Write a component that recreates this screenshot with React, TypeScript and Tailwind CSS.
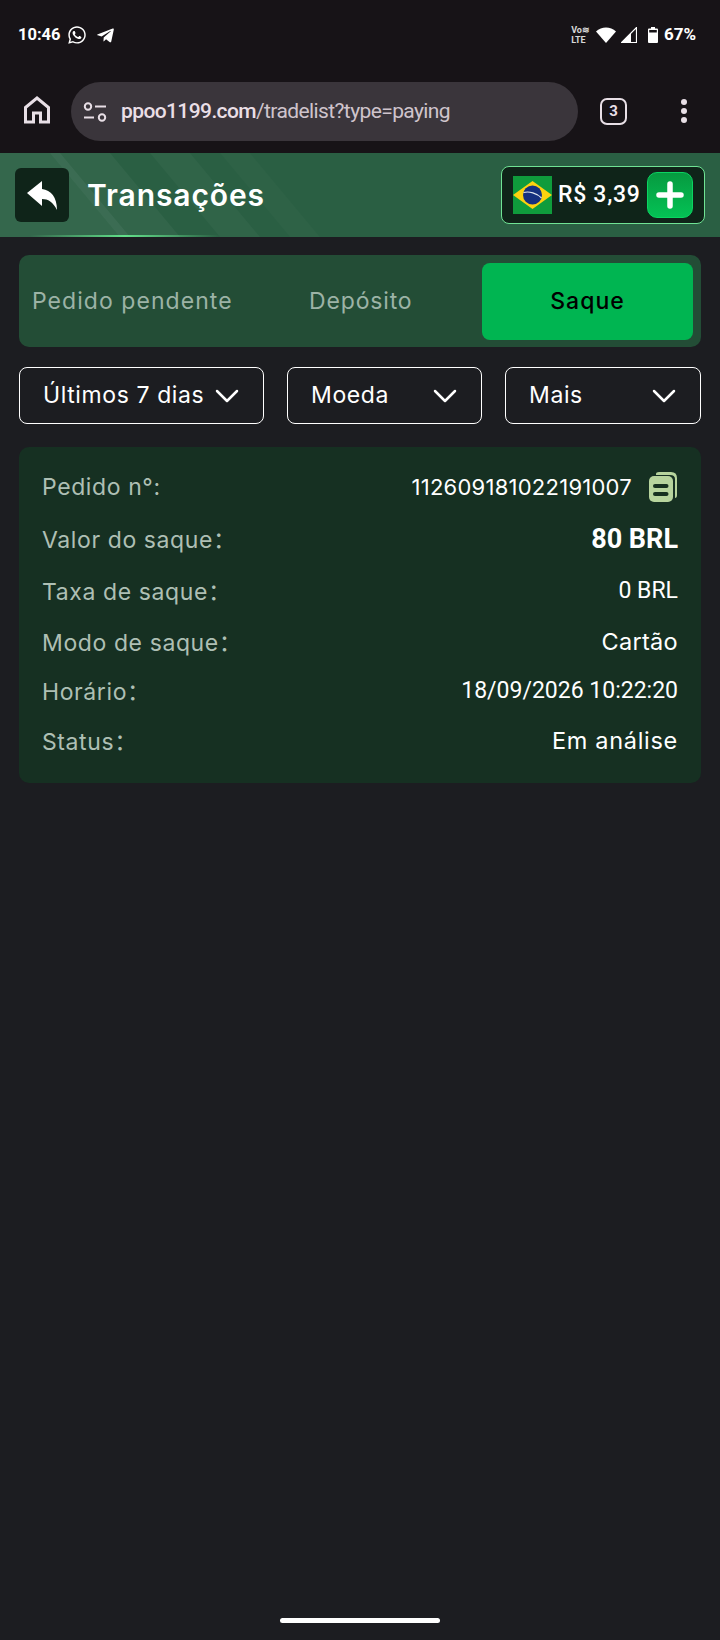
import { ChevronDown } from 'lucide-react';
import { FaWhatsapp, FaTelegramPlane } from 'react-icons/fa';

const rows = [
  { label: 'Valor do saque', value: '80 BRL', cls: "h-[53px] font-['Roboto',sans-serif] text-[27px] font-bold" },
  { label: 'Taxa de saque', value: '0 BRL', cls: "h-[51px] font-['Roboto',sans-serif] text-[23px]" },
  { label: 'Modo de saque', value: 'Cartão', cls: 'h-[50px] text-[23.5px] tracking-[0.3px]' },
  { label: 'Horário', value: '18/09/2026 10:22:20', cls: "h-[49px] font-['Roboto',sans-serif] text-[23px]" },
  { label: 'Status', value: 'Em análise', cls: 'h-[50px] text-[23.5px] tracking-[0.7px]' },
];

function Flag() {
  return (
    <svg width="39" height="38" viewBox="0 0 39 38">
      <rect width="39" height="38" fill="#0f9c3c" />
      <path d="M19.5 5 L39 19 L19.5 33 L0 19 Z" fill="#fcd20f" />
      <circle cx="19.5" cy="19" r="9.5" fill="#15307f" />
      <path d="M10.5 16.5 C16 15 24 17 28.5 22" stroke="#dfe6ee" strokeWidth="1.2" fill="none" />
    </svg>
  );
}

function StatusBar() {
  return (
    <div className="flex h-[70px] items-center justify-between pl-[18px] pr-6 font-['Roboto',sans-serif] text-[17px] font-bold text-white">
      <div className="flex items-center">
        <span className="text-[16.5px]">10:46</span>
        <FaWhatsapp size={20} className="ml-[6px]" />
        <FaTelegramPlane size={19} className="ml-[9px]" />
      </div>
      <div className="flex items-center">
        <div className="mr-[6px] text-[9px] font-bold leading-[10px] text-[#d8d8d8]">
          <div>Vo≋</div>
          <div>LTE</div>
        </div>
        <svg width="20" height="16" viewBox="0 0 20 16" fill="white" className="mr-[5px]">
          <path d="M0 4.5 C5.5 -1 14.5 -1 20 4.5 L10 16 Z" />
        </svg>
        <svg width="16" height="16" viewBox="0 0 16 16" className="mr-[11px]">
          <path d="M15.5 .5 V15.5 H.5 Z" fill="none" stroke="white" strokeWidth="1.2" />
          <path d="M10 6 V15.5 H.5 Z" fill="white" />
        </svg>
        <svg width="10" height="16" viewBox="0 0 10 16" fill="white" className="mr-[6px]">
          <path d="M3 0 H7 V1.5 H9 Q10 1.5 10 2.5 V15 Q10 16 9 16 H1 Q0 16 0 15 V2.5 Q0 1.5 1 1.5 H3 Z" />
          <rect x="1.2" y="3" width="7.6" height="2.5" fill="#171317" />
        </svg>
        <span>67%</span>
      </div>
    </div>
  );
}

function BrowserBar() {
  return (
    <div className="flex h-[83px] items-start pl-[24px] pt-[12px]">
      <svg width="26" height="28" viewBox="0 0 26 28" fill="none" stroke="#e8dfe6" strokeWidth="3" className="mt-[14px]">
        <path d="M1.5 11.5 L13 2 L24.5 11.5 V26 H16.5 V17 H9.5 V26 H1.5 Z" />
      </svg>
      <div className="ml-[21px] flex h-[59px] w-[507px] items-center rounded-full bg-[#3a353b] pl-[12px] font-['Roboto',sans-serif] text-[21px] tracking-[-0.6px]">
        <svg width="24" height="20" viewBox="0 0 24 20" fill="none" stroke="#e8dfe6" strokeWidth="2">
          <circle cx="5" cy="4.5" r="3.2" />
          <path d="M12 4.5 H23" />
          <path d="M1 15.5 H11" />
          <circle cx="19" cy="15.5" r="3.2" />
        </svg>
        <span className="ml-[14px] font-medium text-[#eadfe6]">ppoo1199.com</span>
        <span className="text-[#cfc4cc]">/tradelist?type=paying</span>
      </div>
      <div className="ml-[22px] mt-[16px] flex h-[27px] w-[27px] items-center justify-center rounded-[7px] border-[2.5px] border-[#e8dfe6] font-['Roboto',sans-serif] text-[15px] font-bold text-[#e8dfe6]">
        3
      </div>
      <div className="ml-[54px] mt-[17px] flex flex-col gap-[3px]">
        <span className="h-[6px] w-[6px] rounded-full bg-[#e8dfe6]" />
        <span className="h-[6px] w-[6px] rounded-full bg-[#e8dfe6]" />
        <span className="h-[6px] w-[6px] rounded-full bg-[#e8dfe6]" />
      </div>
    </div>
  );
}

function Header() {
  return (
    <div className="relative flex h-[84px] items-center justify-between overflow-hidden bg-[#2a5f43] px-[15px]">
      {/* diagonal stripes behind the title */}
      <svg className="absolute left-0 top-0" width="420" height="84" viewBox="0 0 420 84">
        <path d="M0 0 H60 L130 84 H0 Z" fill="#ffffff" opacity="0.05" />
        <path d="M50 0 H110 L180 84 H120 Z" fill="#ffffff" opacity="0.04" />
        <path d="M150 0 H190 L260 84 H220 Z" fill="#ffffff" opacity="0.03" />
        <path d="M220 0 H250 L320 84 H290 Z" fill="#ffffff" opacity="0.02" />
      </svg>
      <div className="absolute bottom-0 left-[30px] h-[2px] w-[190px] bg-gradient-to-r from-transparent via-[#62e08a] to-transparent" />
      <div className="relative flex items-center">
        <div className="flex h-[54px] w-[54px] items-center justify-center rounded-[6px] bg-[#0f2419]">
          <svg width="30" height="29" viewBox="0 0 30 29" fill="white">
            <path d="M0 12 L15 0 V8 C24 9 30 16 30 29 C26 21 21 18 15 18 V25 Z" />
          </svg>
        </div>
        <span className="ml-[18px] text-[30px] font-semibold tracking-[0.9px] text-white">Transações</span>
      </div>
      <div className="relative flex h-[58px] w-[204px] items-center rounded-[8px] border border-[#6fe394] bg-[#0f2419] pl-[11px]">
        <Flag />
        <span className="ml-[6px] font-['Roboto',sans-serif] text-[23px] font-medium tracking-[0.7px] text-white">R$ 3,39</span>
        <div className="ml-[6px] flex h-[46px] w-[46px] items-center justify-center rounded-[10px] border border-[#0bd461] bg-gradient-to-b from-[#069a40] to-[#04c255]">
          <svg width="28" height="28" viewBox="0 0 28 28" stroke="white" strokeWidth="5.5" strokeLinecap="round">
            <path d="M14 3 V25 M3 14 H25" />
          </svg>
        </div>
      </div>
    </div>
  );
}

function Tabs() {
  return (
    <div className="flex h-[92px] items-center rounded-[10px] bg-[#234d36] pl-[13px] pr-2 text-[23px]">
      <span className="w-[277px] tracking-[1.05px] text-[#9cb3a6]">Pedido pendente</span>
      <span className="w-[173px] tracking-[0.85px] text-[#9cb3a6]">Depósito</span>
      <div className="flex h-[77px] flex-1 items-center justify-center rounded-[8px] bg-[#00b551] font-medium tracking-[1px] text-black">
        Saque
      </div>
    </div>
  );
}

function Filter({ label, className }: { label: string; className: string }) {
  return (
    <div className={`flex h-[57px] items-center justify-between rounded-[8px] border border-white pl-[23px] pr-[16px] text-[23px] text-white ${className}`}>
      <span className="tracking-[0.6px]">{label}</span>
      <ChevronDown size={40} strokeWidth={1.5} />
    </div>
  );
}

function CopyIcon() {
  return (
    <svg width="30" height="32" viewBox="0 0 30 32" className="ml-[16px]">
      <path d="M8 3 Q8 1 11 1 H23 Q29 1 29 7 V24 Q29 27 27 27 V8 Q27 4 22 4 H8 Z" fill="#b7d49d" />
      <rect x="1" y="5" width="24" height="26" rx="5" fill="#b7d49d" />
      <rect x="5" y="13" width="15.5" height="4" rx="2" fill="#16301f" />
      <rect x="5" y="21" width="15.5" height="4" rx="2" fill="#16301f" />
    </svg>
  );
}

export default function App() {
  return (
    <div className="flex min-h-[1640px] w-[720px] flex-col bg-[#1c1d21] font-['Inter',sans-serif]">
      <div className="bg-[#171317]">
        <StatusBar />
        <BrowserBar />
      </div>
      <Header />
      <div className="px-[19px] pt-[18px]">
        <Tabs />
        <div className="mt-[20px] flex justify-between">
          <Filter label="Últimos 7 dias" className="w-[245px]" />
          <Filter label="Moeda" className="w-[195px]" />
          <Filter label="Mais" className="w-[196px]" />
        </div>
        <div className="mt-[23px] h-[336px] rounded-[10px] bg-[#163022] px-[23px] pt-[14px] text-[23px]">
          <div className="flex h-[52px] items-center justify-between">
            <span className="tracking-[0.6px] text-[#aebfb4]">Pedido n°:</span>
            <div className="flex items-center text-[22px]">
              <span className="tracking-[0.25px] text-white">112609181022191007</span>
              <CopyIcon />
            </div>
          </div>
          {rows.map((r) => (
            <div key={r.label} className="flex items-center justify-between">
              <span className="tracking-[0.6px] text-[#aebfb4]">
                {r.label}
                <span className="font-['Noto_Sans_CJK_SC',sans-serif]">：</span>
              </span>
              <span className={`flex items-center text-white ${r.cls}`}>{r.value}</span>
            </div>
          ))}
        </div>
      </div>
      <div className="mt-auto mb-[17px] h-[5px] w-[160px] self-center rounded-full bg-white" />
    </div>
  );
}
